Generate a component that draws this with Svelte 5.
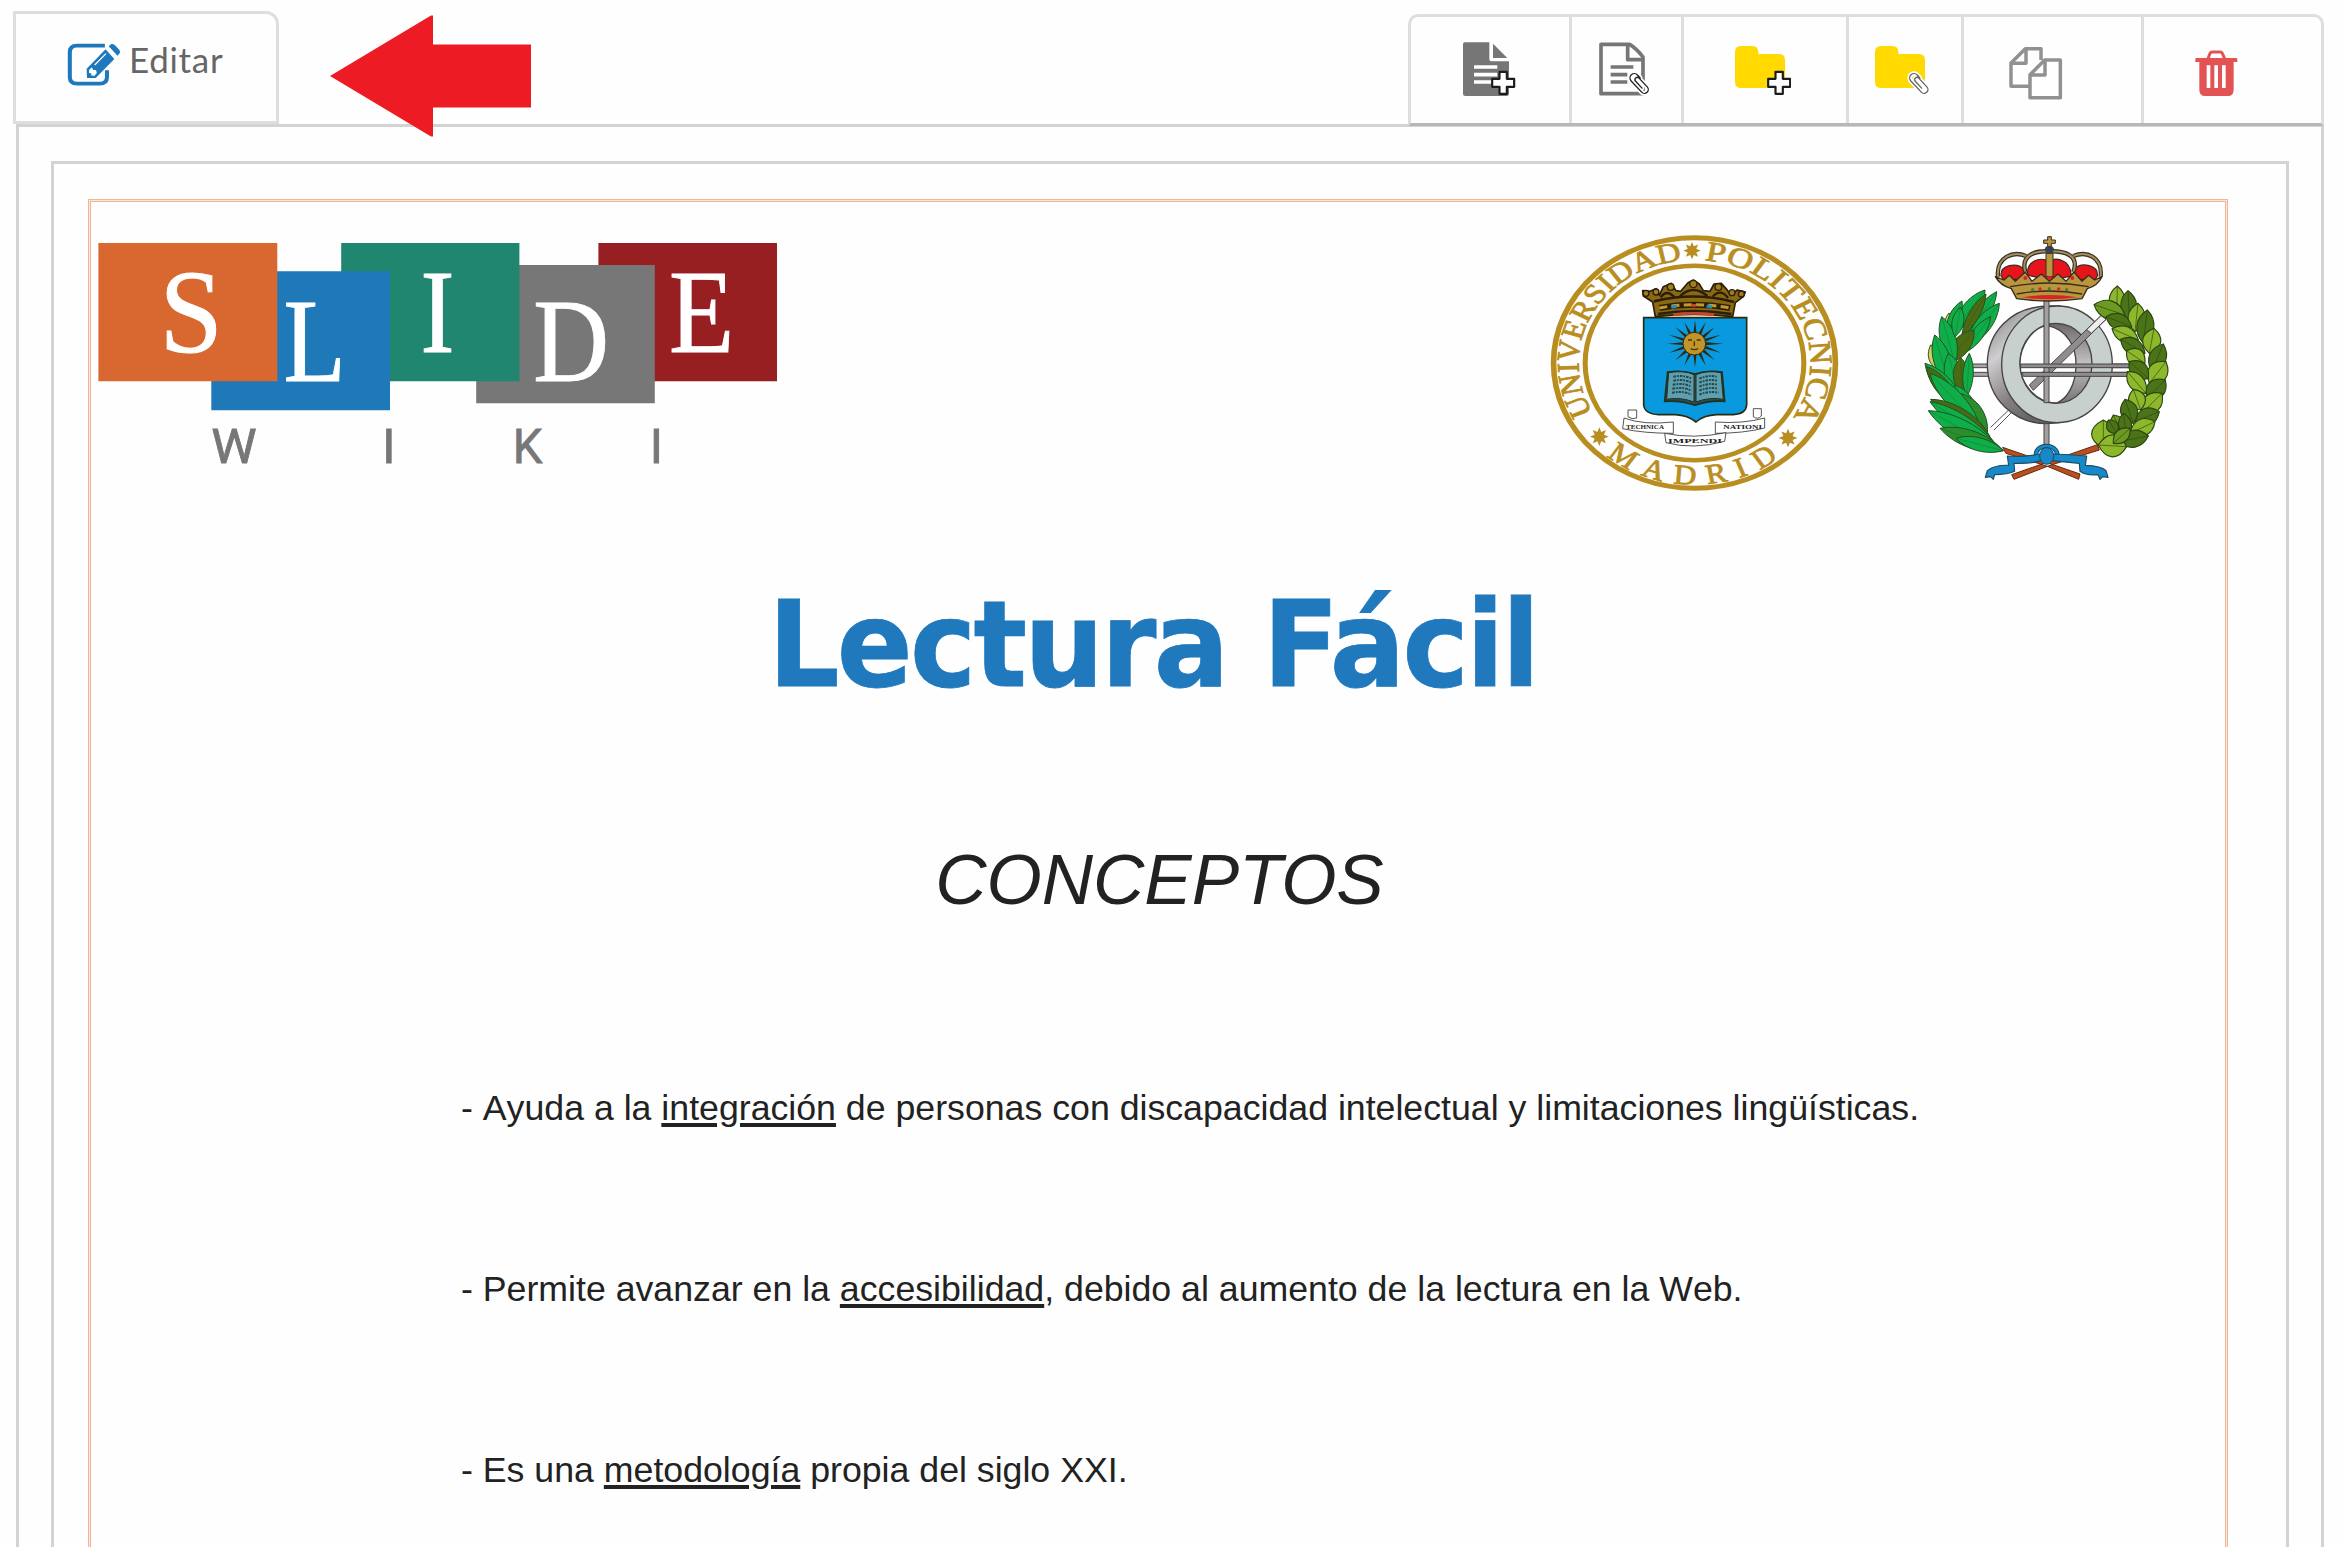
<script>
  const items = [
    { before: '- Ayuda a la ', key: 'integración', after: ' de personas con discapacidad intelectual y limitaciones lingüísticas.' },
    { before: '- Permite avanzar en la ', key: 'accesibilidad', after: ', debido al aumento de la lectura en la Web.' },
    { before: '- Es una ', key: 'metodología', after: ' propia del siglo XXI.' }
  ];

  // Point on the seal's circle, angles in degrees with y pointing down.
  const pt = (r, a) => `${(r * Math.cos((a * Math.PI) / 180)).toFixed(2)} ${(r * Math.sin((a * Math.PI) / 180)).toFixed(2)}`;
  const arc = (r, a, b) => `M${pt(r, a)} A${r} ${r} 0 0 ${b > a ? 1 : 0} ${pt(r, b)}`;

  // Closed star outline around (x, y).
  const star = (x, y, r1, r2, n) => {
    const p = [];
    for (let i = 0; i < n * 2; i++) {
      const r = i % 2 ? r2 : r1;
      const a = (i * Math.PI) / n - Math.PI / 2;
      p.push(`${(x + r * Math.cos(a)).toFixed(1)},${(y + r * Math.sin(a)).toFixed(1)}`);
    }
    return p.join(' ');
  };

  // Leaf outline from its base to its tip.
  const leaf = ([x1, y1, x2, y2, width]) => {
    const w = width * 1.3;
    const dx = x2 - x1, dy = y2 - y1, l = Math.hypot(dx, dy);
    const nx = (-dy / l) * w, ny = (dx / l) * w;
    const ax = x1 + dx * 0.3, ay = y1 + dy * 0.3, bx = x1 + dx * 0.72, by = y1 + dy * 0.72;
    return `M${x1} ${y1}C${ax + nx} ${ay + ny} ${bx + nx} ${by + ny} ${x2} ${y2}C${bx - nx} ${by - ny} ${ax - nx} ${ay - ny} ${x1} ${y1}Z`;
  };

  const g = '#0fae4a', d = '#4c6a12', m = '#2b8d2c', y = '#d6cc62';
  const palm = [
    [165, 340, 146, 280, 20, y], [130, 455, 92, 375, 24, y],
    [200, 350, 290, 215, 20, g], [160, 335, 255, 210, 24, g], [185, 350, 258, 222, 16, d],
    [200, 380, 298, 250, 24, g], [140, 340, 186, 243, 16, g], [190, 400, 272, 290, 18, g],
    [140, 430, 222, 330, 26, d], [165, 430, 125, 290, 24, g], [165, 350, 182, 262, 18, g],
    [150, 500, 104, 345, 26, g], [180, 540, 145, 400, 28, g], [185, 520, 182, 413, 24, d],
    [200, 530, 208, 400, 16, g], [195, 570, 75, 430, 26, g], [175, 560, 80, 440, 22, d],
    [235, 620, 165, 495, 26, g], [262, 640, 180, 520, 28, m], [240, 620, 90, 460, 26, g],
    [270, 650, 92, 538, 28, d], [285, 670, 90, 545, 22, g], [300, 690, 85, 572, 28, g],
    [310, 692, 120, 625, 26, m], [310, 692, 168, 655, 20, g]
  ];
  const lg = '#8db82c', dg = '#4b7419', mg = '#6d9a22';
  const laurel = [
    [650, 285, 652, 198, 24, lg], [688, 300, 684, 212, 24, dg], [675, 285, 582, 254, 28, mg],
    [705, 335, 714, 250, 26, lg], [695, 320, 618, 290, 24, dg], [730, 370, 742, 270, 26, dg],
    [715, 360, 636, 326, 24, lg], [748, 400, 762, 325, 28, lg], [735, 400, 662, 358, 24, dg],
    [755, 455, 790, 372, 26, dg], [735, 430, 680, 392, 26, lg], [748, 490, 798, 425, 30, lg],
    [745, 475, 688, 425, 26, dg], [740, 535, 796, 480, 28, dg], [738, 520, 682, 455, 24, lg],
    [725, 580, 786, 520, 28, lg], [722, 570, 700, 508, 26, lg], [705, 605, 778, 575, 26, dg],
    [700, 610, 675, 538, 26, dg], [690, 640, 765, 605, 26, lg], [670, 650, 640, 585, 24, mg],
    [680, 650, 670, 580, 20, dg], [655, 665, 745, 648, 26, dg], [610, 685, 610, 600, 36, lg],
    [650, 640, 625, 600, 18, dg], [595, 675, 680, 680, 34, lg], [640, 670, 690, 625, 20, mg]
  ];
</script>

{#snippet clip(x, y, ink)}
  <g transform="translate({x} {y}) rotate(-43)" fill="none" stroke-linecap="round">
    <path d="M13 -10V-22A13 13 0 0 0 -13 -22V24A11.500 11.500 0 0 0 10 24V-12A7 7 0 0 0 -4 -12V16" stroke="#fff" stroke-width="14" />
    <path d="M13 -10V-22A13 13 0 0 0 -13 -22V24A11.500 11.500 0 0 0 10 24V-12A7 7 0 0 0 -4 -12V16" stroke={ink} stroke-width="4" />
  </g>
{/snippet}

{#snippet plus(x, y)}
  <path transform="translate({x} {y})" d="M-11 -33H11V-12H33V12H11V33H-11V12H-33V-12H-11Z" fill="#fff" stroke="#1b1c1d" stroke-width="6.5" stroke-linejoin="round" />
{/snippet}

<div class="page">
  <header class="bar">
    <button class="tab">
      <svg width="54" height="44" viewBox="188 130 154 132" preserveAspectRatio="none">
        <path d="M296 138H216Q196 138 196 158V232Q196 252 216 252H282Q302 252 302 232V212" fill="none" stroke="#1e78bc" stroke-width="11.5" />
        <path d="M244 207L298 149L323 178L270 235H245ZM307 140L313 134Q318 131 325 137L337 150Q342 156 337 162L332 168Z" fill="#1e78bc" />
        <path d="M251 211L259 203L262 210L271 212L273 220L266 229L257 227V221L251 220Z" fill="#fff" />
        <path d="M267 196L299 162" stroke="#fff" stroke-width="3.5" />
      </svg>
      <span>Editar</span>
    </button>

    <svg class="arrow" width="202" height="122" viewBox="0 0 202 122">
      <path d="M0 61L101 0.5H103V29.5H201V92.5H103V121.500H101Z" fill="#ed1c24" />
    </svg>

    <nav class="tools">
      <button class="t1">
        <svg width="56" height="60" viewBox="186 126 168 180">
          <path d="M194 127H268V176Q268 184 276 184H327V280Q327 288 320 288H196Q189 288 189 281V133Q189 127 194 127ZM279 131L322 174H279Z" fill="#767676" />
          <path d="M222 201H292M222 224H292M222 246H292" stroke="#fff" stroke-width="11" />
          {@render plus(309.500, 248.500)}
        </svg>
      </button>
      <button class="t2">
        <svg width="56" height="60" viewBox="597 126 168 180">
          <path d="M603 133H689Q709 145 729 171V281H603ZM683 133V179H731" fill="none" stroke="#767676" stroke-width="11" stroke-linejoin="round" />
          <path d="M632 201H700M632 224H682M632 246H682" stroke="#767676" stroke-width="11" />
          {@render clip(718, 250, '#222')}
        </svg>
      </button>
      <button class="t3">
        <svg width="56" height="60" viewBox="1005 126 168 180">
          <path d="M1005 157Q1005 138 1024 138H1056Q1075 138 1075 157V162H1136Q1155 162 1155 181V245Q1155 264 1136 264H1024Q1005 264 1005 245Z" fill="#ffd900" />
          {@render plus(1137.500, 248.500)}
        </svg>
      </button>
      <button class="t4">
        <svg width="56" height="60" viewBox="105 126 168 180">
          <path d="M105 157Q105 138 124 138H156Q175 138 175 157V162H236Q255 162 255 181V245Q255 264 236 264H124Q105 264 105 245Z" fill="#ffd900" />
          {@render clip(237, 250, '#666')}
        </svg>
      </button>
      <button class="t5">
        <svg width="56" height="60" viewBox="507 126 168 180">
          <g fill="none" stroke="#919191" stroke-width="10.500" stroke-linejoin="round">
            <path d="M603 180V146H556L513 189V259H570M558 146V190H513" />
            <path d="M661 180V293H570V224L614 180ZM615 180V225H570" fill="#fff" />
          </g>
        </svg>
      </button>
      <button class="t6">
        <svg width="56" height="60" viewBox="1065 126 168 180">
          <path d="M1104 176L1110 160Q1112 156 1116 156H1141Q1145 156 1147 160L1154 176" fill="none" stroke="#e35353" stroke-width="9" />
          <path d="M1069 174H1188Q1192 174 1192 178V186H1181V270Q1180 288 1164 288H1095Q1079 288 1078 270V186H1066V178Q1066 174 1069 174Z" fill="#e35353" />
          <path d="M1100 196H1111V264H1100ZM1123 196H1134V264H1123ZM1146 196H1157V264H1146Z" fill="#fff" />
        </svg>
      </button>
    </nav>
  </header>

  <main class="outer">
    <section class="inner">
      <article class="slide">
        <div class="logos">
          <svg class="wiki" width="680" height="244" viewBox="98 243 680 244">
            <path d="M598.400 243H777V381.300H598.400Z" fill="#971f22" />
            <path d="M476.200 265H654.800V403.300H476.200Z" fill="#777" />
            <path d="M341.200 243H519.400V381.300H341.200Z" fill="#20866f" />
            <path d="M211.300 271.300H390V410.300H211.300Z" fill="#1f79b9" />
            <path d="M98.400 243H277.300V381.300H98.400Z" fill="#d86830" />
            <g class="serif">
              <text transform="translate(159.500 352.300) scale(.96 1)">S</text>
              <text transform="translate(283.500 381.300) scale(.86 1)">L</text>
              <text transform="translate(420.500 352.300) scale(.86 1)">I</text>
              <text transform="translate(533.300 381.300) scale(.885 1)">D</text>
              <text transform="translate(669 352.300) scale(.9 1)">E</text>
            </g>
            <g class="sans">
              <text transform="translate(211.200 463) scale(1.05 1)">W</text>
              <text x="382.300" y="463">I</text>
              <text transform="translate(512.800 463) scale(.97 1)">K</text>
              <text x="649.800" y="463">I</text>
            </g>
          </svg>

          <svg class="seal" width="330" height="280" viewBox="0 0 990 840">
            <g transform="translate(493.500 429) scale(3.375 3)">
              <g fill="none" stroke="#b98e20">
                <circle r="125.300" stroke-width="5" />
                <circle r="97.200" stroke-width="4.500" />
              </g>
              <defs>
                <path id="arc-left" d={arc(103, 151, 266)} />
                <path id="arc-right" d={arc(103, 275, 395)} />
                <path id="arc-bottom" d={arc(121.500, 130, 46)} />
              </defs>
              <g class="ring-text">
                <text><textPath href="#arc-left" textLength="203" lengthAdjust="spacingAndGlyphs">UNIVERSIDAD</textPath></text>
                <text><textPath href="#arc-right" textLength="210" lengthAdjust="spacingAndGlyphs">POLITECNICA</textPath></text>
                <text><textPath href="#arc-bottom" textLength="165">MADRID</textPath></text>
              </g>
            </g>
            <g fill="#b98e20">
              <polygon points={star(486, 92, 26, 14, 8)} />
              <polygon points={star(208, 650, 28, 15, 8)} />
              <polygon points={star(774, 654, 28, 15, 8)} />
            </g>
            <!-- crown -->
            <path d="M376 290L368 246L340 228L338 212L360 214L378 206L388 226L400 200L424 190L438 212L452 214L474 188L490 180L508 192L520 212L540 214L552 192L574 190L590 208L602 226L622 210L646 216L640 230L616 248L608 290Q492 276 376 290Z" fill="#8a6914" stroke="#2c1e08" stroke-width="5" stroke-linejoin="round" />
            <path d="M372 244Q490 214 612 246M384 282Q490 264 604 282" fill="none" stroke="#2c1e08" stroke-width="8" />
            <path d="M392 232Q410 206 434 232M450 228Q490 192 532 228M548 230Q572 204 594 234" fill="none" stroke="#2c1e08" stroke-width="7" />
            <path d="M388 264Q490 244 600 264" fill="none" stroke="#2c1e08" stroke-width="18" />
            <path d="M388 264Q490 244 600 264" fill="none" stroke="#c39b28" stroke-width="9" stroke-dasharray="24 13" />
            <path d="M424 262l16 -3M530 258l16 3" stroke="#1c91d0" stroke-width="9" />
            <path d="M484 256h14M430 284Q490 276 552 284" stroke="#c8442a" stroke-width="8" fill="none" />
            <g fill="#a27d1c" stroke="#2c1e08" stroke-width="4">
              <circle cx="348" cy="220" r="9" /><circle cx="378" cy="216" r="9" /><circle cx="422" cy="201" r="10" />
              <circle cx="490" cy="192" r="11" /><circle cx="565" cy="201" r="10" /><circle cx="606" cy="218" r="9" /><circle cx="634" cy="222" r="9" />
            </g>
            <!-- shield -->
            <path d="M341 293H650V555Q648 582 610 584H560Q520 586 498 606Q474 586 436 584H386Q344 582 341 555Z" fill="#0899df" stroke="#2b2a12" stroke-width="5" />
            <polygon points={star(495, 371, 84, 29, 16)} fill="#2b2a12" transform="translate(495 371) scale(1 .84) translate(-495 -371)" />
            <circle cx="493" cy="371" r="34" fill="#c2952b" stroke="#2b2a12" stroke-width="3" />
            <path d="M474 360h12M500 360h12M493 364v14M482 386q11 6 22 0" stroke="#4b3308" stroke-width="4" fill="none" />
            <!-- book -->
            <path d="M413 456L404 544Q450 540 495 556Q540 540 584 544L576 456Q530 450 495 462Q460 450 413 456Z" fill="#2c4a52" stroke="#21301f" stroke-width="5" />
            <path d="M416 458Q462 450 492 464V546Q450 530 410 538ZM573 458Q530 450 498 464V546Q538 530 580 538Z" fill="#5d9fae" stroke="#21301f" stroke-width="3" />
            <path d="M430 470Q462 464 484 476M430 482Q462 476 484 488M428 494Q462 488 484 500M427 506Q462 500 484 512M426 518Q462 512 484 524M508 476Q535 464 560 470M508 488Q535 476 562 482M508 500Q535 488 563 494M508 512Q535 500 564 506M508 524Q535 512 565 518" fill="none" stroke="#24464e" stroke-width="6" stroke-dasharray="8 3 5 3" />
            <!-- motto ribbon -->
            <g fill="#fff" stroke="#333" stroke-width="2.500" stroke-linejoin="round">
              <path d="M294 570H320V594Q306 600 294 590ZM694 566H670V590Q684 600 694 588Z" />
              <path d="M282 594Q340 616 430 606V640Q340 640 278 626ZM704 594Q640 612 556 606V640Q640 640 704 624Z" />
              <path d="M404 640Q490 658 588 638L584 664Q490 690 408 668Z" />
            </g>
            <g class="motto">
              <text x="288" y="627" textLength="114" lengthAdjust="spacingAndGlyphs">TECHNICA</text>
              <text x="580" y="627" textLength="116" lengthAdjust="spacingAndGlyphs">NATIONI</text>
              <text x="414" y="670" textLength="162" lengthAdjust="spacingAndGlyphs">IMPENDI</text>
            </g>
          </svg>

          <svg class="crest" width="290" height="280" viewBox="0 0 870 840">
            <defs>
              <linearGradient id="metal" x1="0" x2=".5" y1="0" y2="1"><stop offset="0" stop-color="#777" /><stop offset=".4" stop-color="#cfcdd0" /><stop offset=".75" stop-color="#857f81" /><stop offset="1" stop-color="#686466" /></linearGradient>
              <linearGradient id="core" x1="0" x2="0" y1="0" y2="1"><stop offset="0" stop-color="#6c6869" /><stop offset=".5" stop-color="#c4c1c3" /><stop offset="1" stop-color="#777375" /></linearGradient>
            </defs>
            <path d="M205 432H690V443H205ZM205 457H690V469H205Z" fill="#aaa6a8" stroke="#444" stroke-width="3" />
            <path d="M272 622L326 570M282 630L334 578" stroke="#555" stroke-width="3" />
            <!-- ring -->
            <path d="M450 258C330 258 262 340 262 432C262 540 345 611 440 611L480 608V258Z" fill="url(#metal)" stroke="#444" stroke-width="4" />
            <ellipse cx="471" cy="433" rx="166" ry="175" fill="#c8d0cd" stroke="#444" stroke-width="4" />
            <ellipse cx="468" cy="430" rx="108" ry="120" fill="url(#core)" stroke="#444" stroke-width="4" />
            <path d="M440 316C505 328 530 385 528 440C526 490 505 535 470 549C405 548 360 490 360 430C360 380 395 325 440 316Z" fill="#fefefe" stroke="#444" stroke-width="4" />
            <path d="M388 495L604 286L618 298L400 511Z" fill="#918d8f" stroke="#444" stroke-width="3" />
            <path d="M560 329L604 286L618 298L574 340Z" fill="#eee" stroke="#444" stroke-width="3" />
            <path d="M432 235H447V548H432ZM432 611H447V680H432Z" fill="#a39fa1" stroke="#444" stroke-width="3" />
            <path d="M362 432H690V443H362ZM366 457H690V469H370Z" fill="#918d8f" stroke="#444" stroke-width="3" />
            <!-- stems and bow -->
            <path d="M308 682L540 762L536 778L440 738L318 700ZM592 674L335 764L342 778L450 736L598 690Z" fill="#bd4d1c" stroke="#5c2b12" stroke-width="3" />
            {#each palm as p}
              <path d={leaf(p)} fill={p[5]} stroke="#1f5420" stroke-width="3" />
              <path d="M{p[0]} {p[1]}L{p[2]} {p[3]}" stroke="#1f5420" stroke-width="1.500" opacity=".6" />
            {/each}
            {#each laurel as p}
              <path d={leaf(p)} fill={p[5]} stroke="#2d4612" stroke-width="3.500" />
              <path d="M{p[0]} {p[1]}L{p[2]} {p[3]}" stroke="#2d4612" stroke-width="2" />
            {/each}
            <path d="M408 708C404 668 474 668 472 708" fill="none" stroke="#174e6c" stroke-width="14" />
            <path d="M408 708C404 668 474 668 472 708" fill="none" stroke="#1789c6" stroke-width="8" />
            <path d="M420 702Q370 712 322 708L326 736Q284 734 262 752L256 772L272 770L280 778L284 764Q322 764 344 754L342 730Q390 732 424 722ZM458 702Q510 704 560 708L556 736Q604 738 618 752L624 772L608 770L600 778L594 764Q560 768 540 754L538 730Q490 726 458 722Z" fill="#1789c6" stroke="#174e6c" stroke-width="3.500" stroke-linejoin="round" />
            <ellipse cx="440" cy="708" rx="21" ry="25" fill="#1789c6" stroke="#174e6c" stroke-width="3" />
            <!-- royal crown -->
            <g stroke="#3a2a1c" stroke-width="3.500">
              <path d="M303 168C300 135 350 125 372 148L374 178H310ZM382 165C380 110 445 110 447 130C450 108 512 112 514 168L450 182ZM592 168C596 135 545 125 524 146L522 178H586Z" fill="#e8141c" />
            </g>
            <g fill="none">
              <path d="M294 170C288 110 340 92 378 108M376 156C362 108 400 92 446 94C500 92 538 108 520 156M602 170C608 110 560 92 520 108" stroke="#3a3026" stroke-width="13" />
              <path d="M294 170C288 110 340 92 378 108M376 156C362 108 400 92 446 94C500 92 538 108 520 156M602 170C608 110 560 92 520 108" stroke="#a18f5c" stroke-width="6" />
            </g>
            <path d="M438 100H459V170H438Z" fill="#b8963e" stroke="#3a2a1c" stroke-width="3" />
            <ellipse cx="448" cy="88" rx="14" ry="11" fill="#33405c" />
            <path d="M443 50H454V60H466V70H454V80H443V70H431V60H443Z" fill="#b8963e" stroke="#3a2a1c" stroke-width="3" />
            <path d="M286 170L312 180L328 166L346 184L376 156L396 184L424 162L448 184L474 162L498 184L522 156L546 184L566 166L584 180L606 170Q594 196 562 206L546 236Q448 250 350 236L334 206Q300 196 286 170Z" fill="#b8963e" stroke="#3a2a1c" stroke-width="4" stroke-linejoin="round" />
            <path d="M330 200Q448 178 566 200M350 222Q448 204 546 222" fill="none" stroke="#3a2a1c" stroke-width="4" />
            <path d="M366 232Q448 218 532 232Q448 244 366 232Z" fill="#d8232a" />
            <g fill="#d8232a"><circle cx="376" cy="174" r="6" /><circle cx="448" cy="174" r="6" /><circle cx="517" cy="174" r="6" /><circle cx="420" cy="207" r="5" /><circle cx="476" cy="207" r="5" /></g>
            <g fill="#4f7b39"><circle cx="398" cy="209" r="5" /><circle cx="448" cy="206" r="5" /><circle cx="500" cy="209" r="5" /></g>
          </svg>
        </div>

        <h1>Lectura Fácil</h1>
        <h2>CONCEPTOS</h2>
        <div class="list">
          {#each items as it}
            <p>{it.before}<u>{it.key}</u>{it.after}</p>
          {/each}
        </div>
      </article>
    </section>
  </main>
</div>

<style>
  :global(body) { background: #fff; overflow: hidden; }
  .page { width: 2345px; height: 1547px; overflow: hidden; background: #fefefe; display: flex; flex-direction: column; box-sizing: border-box; font-family: "Liberation Sans", Arial, sans-serif; }
  .page * { box-sizing: border-box; }
  svg { display: block; flex: none; }
  button { background: none; border: 0; padding: 0; margin: 0; }

  .bar { height: 124px; flex: none; display: flex; align-items: flex-start; padding: 0 21px 0 13px; position: relative; z-index: 1; }
  .tab { width: 266px; height: 113px; margin-top: 11px; border: 3px solid #dedede; border-top-right-radius: 13px; display: flex; align-items: flex-start; padding: 29px 0 0 51px; background: #fefefe; }
  .tab span { font: 35px/44px Lato, sans-serif; letter-spacing: .7px; color: #666; margin: -6px 0 0 8px; }
  .arrow { margin: 15px 0 0 51px; }

  .tools { margin: 14px 0 0 auto; height: 112px; width: 916px; display: grid; grid-template-columns: 161px 112px 165px 115px 180px 1fr; border: 3px solid #dedede; border-bottom: 3px solid #b7b7b7; border-radius: 10px 10px 0 0; background: #fefefe; }
  .tools button { border-right: 3px solid #dedede; padding-top: 25px; display: flex; }
  .tools .t1 { padding-left: 51px; }
  .tools .t2 { padding-left: 27px; }
  .tools .t3 { padding-left: 51px; }
  .tools .t4 { padding-left: 26px; }
  .tools .t5 { padding-left: 45px; }
  .tools .t6 { padding-left: 51px; border-right: 0; }

  .outer { flex: 1; margin: 0 21px 0 16px; border: 3px solid #d3d3d3; border-bottom: 0; padding: 34px 32px 0; display: flex; }
  .inner { flex: 1; border: 3px solid #d3d3d3; border-bottom: 0; padding: 35px 58px 0 34px; display: flex; }
  .slide { flex: 1; border: 3px double #efb797; border-bottom: 0; background: linear-gradient(#fefefe, #fefefe) padding-box, #fbe6da border-box; }

  .logos { display: flex; align-items: flex-start; padding: 18px 0 0 7px; height: 298px; }
  .wiki { margin-top: 23px; }
  .seal { margin-left: 752px; }
  .crest { margin-left: 40px; }
  .serif text { font: 118.500px "Liberation Serif", serif; fill: #fff; stroke: #fff; stroke-width: 1px; }
  .sans text { font: 48.700px Roboto, sans-serif; fill: #777; stroke: #777; stroke-width: .8px; }
  .ring-text text { font: 28px "Liberation Serif", serif; fill: #b98e20; stroke: #b98e20; stroke-width: .8px; }
  .motto text { font: bold 20px "Liberation Serif", serif; fill: #222; }

  h1 { margin: 75px 0 0; padding-right: 11px; text-align: center; font: bold 119px/140px "DejaVu Sans", sans-serif; letter-spacing: -2.900px; -webkit-text-stroke: .8px #2078bd; color: #2078bd; transform: scaleX(.94); white-space: nowrap; }
  h2 { margin: 125px 0 0; padding-left: 3px; text-align: center; font: italic 71px/80px "Liberation Sans", Arial, sans-serif; color: #222; }
  .list { margin-top: 168px; padding-left: 370px; display: flex; flex-direction: column; gap: 140px; }
  p { margin: 0; font-size: 35.700px; line-height: 41px; color: #222; white-space: nowrap; font-kerning: none; }
  u { text-decoration-thickness: 3.500px; text-underline-offset: 3px; }
</style>
